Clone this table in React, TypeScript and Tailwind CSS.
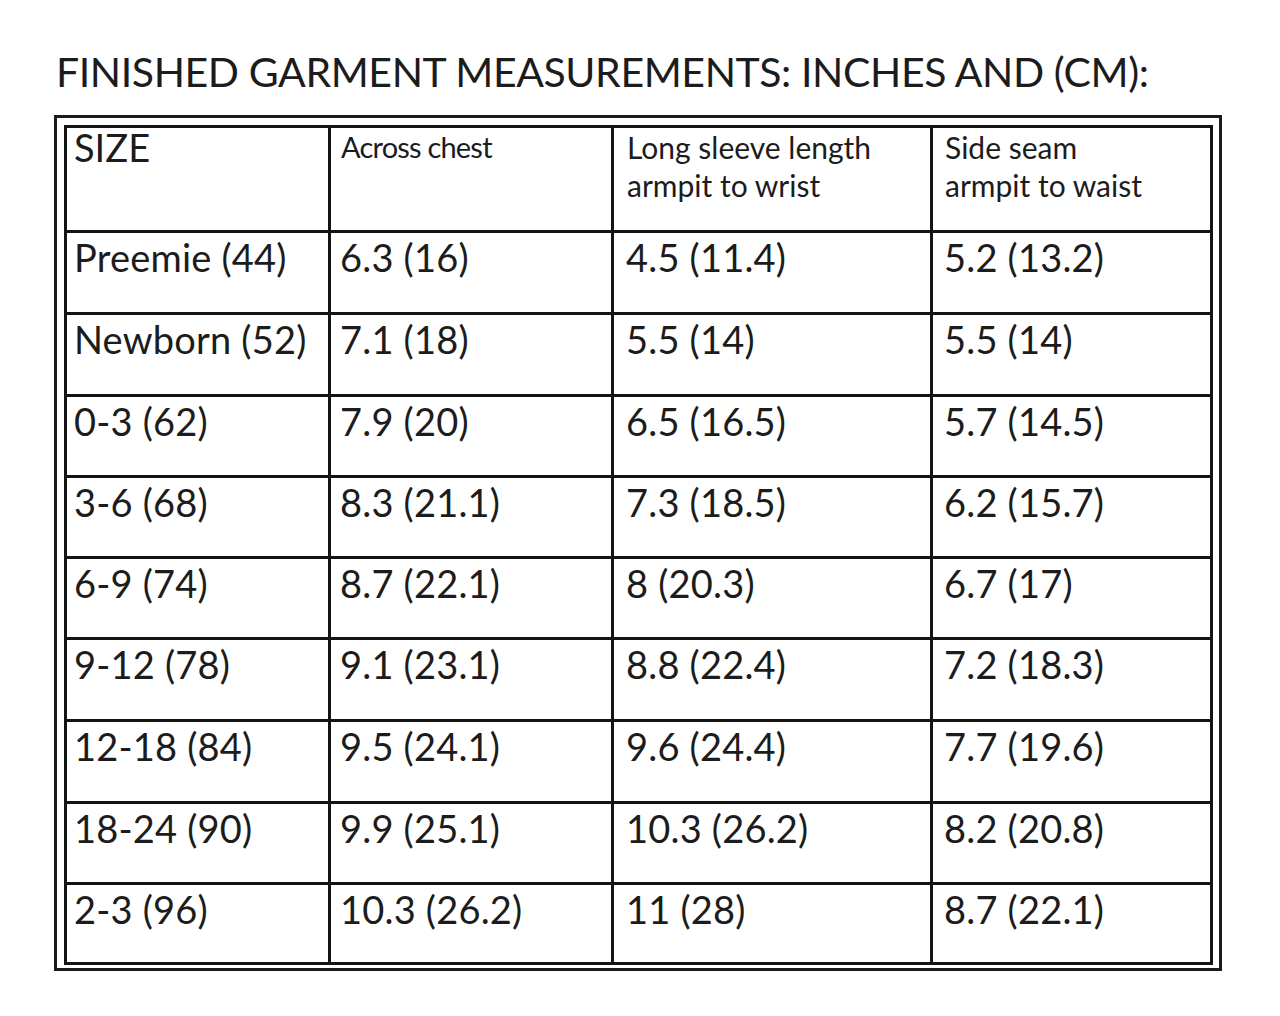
import React from "react";

const rows: [string, string, string, string][] = [
  ["Preemie (44)", "6.3 (16)", "4.5 (11.4)", "5.2 (13.2)"],
  ["Newborn (52)", "7.1 (18)", "5.5 (14)", "5.5 (14)"],
  ["0-3 (62)", "7.9 (20)", "6.5 (16.5)", "5.7 (14.5)"],
  ["3-6 (68)", "8.3 (21.1)", "7.3 (18.5)", "6.2 (15.7)"],
  ["6-9 (74)", "8.7 (22.1)", "8 (20.3)", "6.7 (17)"],
  ["9-12 (78)", "9.1 (23.1)", "8.8 (22.4)", "7.2 (18.3)"],
  ["12-18 (84)", "9.5 (24.1)", "9.6 (24.4)", "7.7 (19.6)"],
  ["18-24 (90)", "9.9 (25.1)", "10.3 (26.2)", "8.2 (20.8)"],
  ["2-3 (96)", "10.3 (26.2)", "11 (28)", "8.7 (22.1)"],
];

const pads = ["pl-[7px]", "pl-[9px]", "pl-[12px]", "pl-[11px]"];

export default function App() {
  return (
    <div className="w-[1280px] h-[1016px] bg-white text-[#1c1c1c] font-['Lato','Liberation_Sans',sans-serif] pt-[51px]">
      <div className="pl-[56px] text-[41px] leading-none tracking-[-0.4px] whitespace-nowrap">
        FINISHED GARMENT MEASUREMENTS: INCHES AND (CM):
      </div>
      <div className="mt-[23px] ml-[54px] w-[1168px] border-[3px] border-[#1a1a1a] pl-[7px] pr-[6px] pt-[7px] pb-[3px]">
        <div className="grid grid-cols-[261px_280px_316px_277px] grid-rows-[102px_79px_79px_78px_78px_78px_79px_79px_78px_77px] gap-[3px] p-[3px] bg-[#141414]">
          <div className="bg-white pl-[7px] pt-[0px] text-[38px] leading-none">SIZE</div>
          <div className="bg-white pl-[10px] text-[29px] leading-[38px] tracking-[-0.8px]">Across chest</div>
          <div className="bg-white pl-[13px] text-[30px] leading-[38px]">
            <div>Long sleeve length</div>
            <div>armpit to wrist</div>
          </div>
          <div className="bg-white pl-[12px] text-[30px] leading-[38px]">
            <div>Side seam</div>
            <div>armpit to waist</div>
          </div>
          {rows.map((r, i) =>
            r.map((c, j) => (
              <div
                key={`${i}-${j}`}
                className={`bg-white ${pads[j]} pt-[5px] text-[38px] leading-none tracking-[0.2px] whitespace-nowrap`}
              >
                {c}
              </div>
            ))
          )}
        </div>
      </div>
    </div>
  );
}
